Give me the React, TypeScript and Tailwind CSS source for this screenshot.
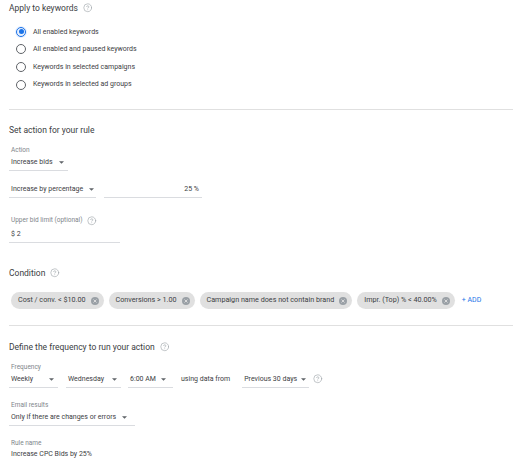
import { CircleHelp } from 'lucide-react';

const font = { fontFamily: 'Roboto, "Noto Sans", sans-serif' };

function Help() {
  return <CircleHelp className="w-[9.5px] h-[9.5px] text-[#9aa0a6] shrink-0" strokeWidth={1.5} />;
}

function Caret() {
  return (
    <svg className="w-[5px] h-[3px] shrink-0" viewBox="0 0 10 5">
      <path d="M0 0l5 5 5-5z" fill="#5f6368" />
    </svg>
  );
}

function Radio({ checked, label }: { checked?: boolean; label: string }) {
  return (
    <div className="h-[17.6px] flex items-center gap-[6px] pl-[6px]">
      {checked ? (
        <div className="w-[12px] h-[12px] rounded-full bg-[#e8f0fe] flex items-center justify-center">
          <div className="w-[10px] h-[10px] rounded-full border-[1.3px] border-[#1a73e8] flex items-center justify-center">
            <div className="w-[5px] h-[5px] rounded-full bg-[#1a73e8]" />
          </div>
        </div>
      ) : (
        <div className="w-[12px] h-[12px] flex items-center justify-center">
          <div className="w-[10px] h-[10px] rounded-full border-[1.2px] border-[#5f6368]" />
        </div>
      )}
      <span className="text-[7px] text-[#3c4043]">{label}</span>
    </div>
  );
}

function Chip({ label }: { label: string }) {
  return (
    <div className="h-[17px] rounded-full bg-[#e0e0e0] flex items-center pl-[7px] pr-[5px] gap-[5px]">
      <span className="text-[7.2px] text-[#3c4043] whitespace-nowrap">{label}</span>
      <svg className="w-[8px] h-[8px]" viewBox="0 0 16 16">
        <circle cx="8" cy="8" r="8" fill="#9aa0a6" />
        <path d="M5 5l6 6M11 5l-6 6" stroke="#e0e0e0" strokeWidth="1.8" />
      </svg>
    </div>
  );
}

function Select({ value, width, layout = 'gap-[6px]' }: { value: string; width: string; layout?: string }) {
  return (
    <div className={`${width} pb-[2px] border-b border-[#dadce0]`}>
      <div className={`h-[12px] flex items-center pl-[2px] ${layout}`}>
        <span className="text-[7px] text-[#3c4043] whitespace-nowrap">{value}</span>
        <Caret />
      </div>
    </div>
  );
}

function Heading({ children }: { children: React.ReactNode }) {
  return (
    <div className="h-[12px] flex items-center gap-[5px]">
      <span className="text-[8.5px] text-[#3c4043]">{children}</span>
      <Help />
    </div>
  );
}

export default function App() {
  return (
    <div className="w-[513px] h-[460px] bg-white overflow-hidden" style={font}>
      {/* Apply to keywords */}
      <div className="ml-[9px] h-[110px] box-border border-b border-[#e0e0e0] pt-[2px]">
        <Heading>Apply to keywords</Heading>
        <div className="mt-[9px]">
          <Radio checked label="All enabled keywords" />
          <Radio label="All enabled and paused keywords" />
          <Radio label="Keywords in selected campaigns" />
          <Radio label="Keywords in selected ad groups" />
        </div>
      </div>

      {/* Set action */}
      <div className="ml-[9px] h-[216px] box-border border-b border-[#e0e0e0] pt-[14px]">
        <div className="h-[12px] flex items-center">
          <span className="text-[8.5px] text-[#3c4043]">Set action for your rule</span>
        </div>

        <div className="mt-[10px] h-[10px] flex items-center pl-[2px]">
          <span className="text-[6.5px] text-[#80868b]">Action</span>
        </div>
        <Select value="Increase bids" width="w-[59px]" />

        <div className="mt-[12px] flex gap-[8px]">
          <Select value="Increase by percentage" width="w-[87px]" />
          <div className="w-[98px] pb-[2px] border-b border-[#dadce0]">
            <div className="h-[12px] flex items-center justify-end pr-[3px]">
              <span className="text-[7px] text-[#3c4043]">25 %</span>
            </div>
          </div>
        </div>

        <div className="mt-[18px] h-[10px] flex items-center gap-[5px] pl-[2px]">
          <span className="text-[6.5px] text-[#80868b]">Upper bid limit (optional)</span>
          <Help />
        </div>
        <div className="mt-[2px] w-[111px] pb-[2px] border-b border-[#dadce0]">
          <div className="h-[12px] flex items-center pl-[2px]">
            <span className="text-[7px] text-[#3c4043]">$ 2</span>
          </div>
        </div>

        <div className="mt-[24px]">
          <Heading>Condition</Heading>
        </div>
        <div className="mt-[13px] flex items-center gap-[5px] pl-[2px]">
          <Chip label="Cost / conv. < $10.00" />
          <Chip label="Conversions > 1.00" />
          <Chip label="Campaign name does not contain brand" />
          <Chip label="Impr. (Top) % < 40.00%" />
          <span className="ml-[2px] text-[7px] text-[#1a73e8] whitespace-nowrap">+ ADD</span>
        </div>
      </div>

      {/* Frequency */}
      <div className="ml-[9px] pt-[15px]">
        <Heading>Define the frequency to run your action</Heading>

        <div className="mt-[10px] h-[10px] flex items-center pl-[2px]">
          <span className="text-[6.5px] text-[#80868b]">Frequency</span>
        </div>
        <div className="flex items-start">
          <Select value="Weekly" width="w-[49px]" layout="justify-between pr-[4px]" />
          <div className="ml-[8px]">
            <Select value="Wednesday" width="w-[55px]" layout="justify-between pr-[4px]" />
          </div>
          <div className="ml-[7px]">
            <Select value="6:00 AM" width="w-[45px]" layout="gap-[5px]" />
          </div>
          <div className="ml-[8px] h-[12px] flex items-center">
            <span className="text-[7px] text-[#3c4043] whitespace-nowrap">using data from</span>
          </div>
          <div className="ml-[12px]">
            <Select value="Previous 30 days" width="w-[67px]" layout="justify-between pr-[3px]" />
          </div>
          <div className="ml-[4px] h-[12px] flex items-center">
            <Help />
          </div>
        </div>

        <div className="mt-[13px] h-[10px] flex items-center pl-[2px]">
          <span className="text-[6.5px] text-[#80868b]">Email results</span>
        </div>
        <Select value="Only if there are changes or errors" width="w-[126px]" />

        <div className="mt-[13px] h-[10px] flex items-center pl-[2px]">
          <span className="text-[6.5px] text-[#80868b]">Rule name</span>
        </div>
        <div className="h-[10px] flex items-center pl-[2px]">
          <span className="text-[7px] leading-[10px] text-[#3c4043]">Increase CPC Bids by 25%</span>
        </div>
      </div>
    </div>
  );
}
